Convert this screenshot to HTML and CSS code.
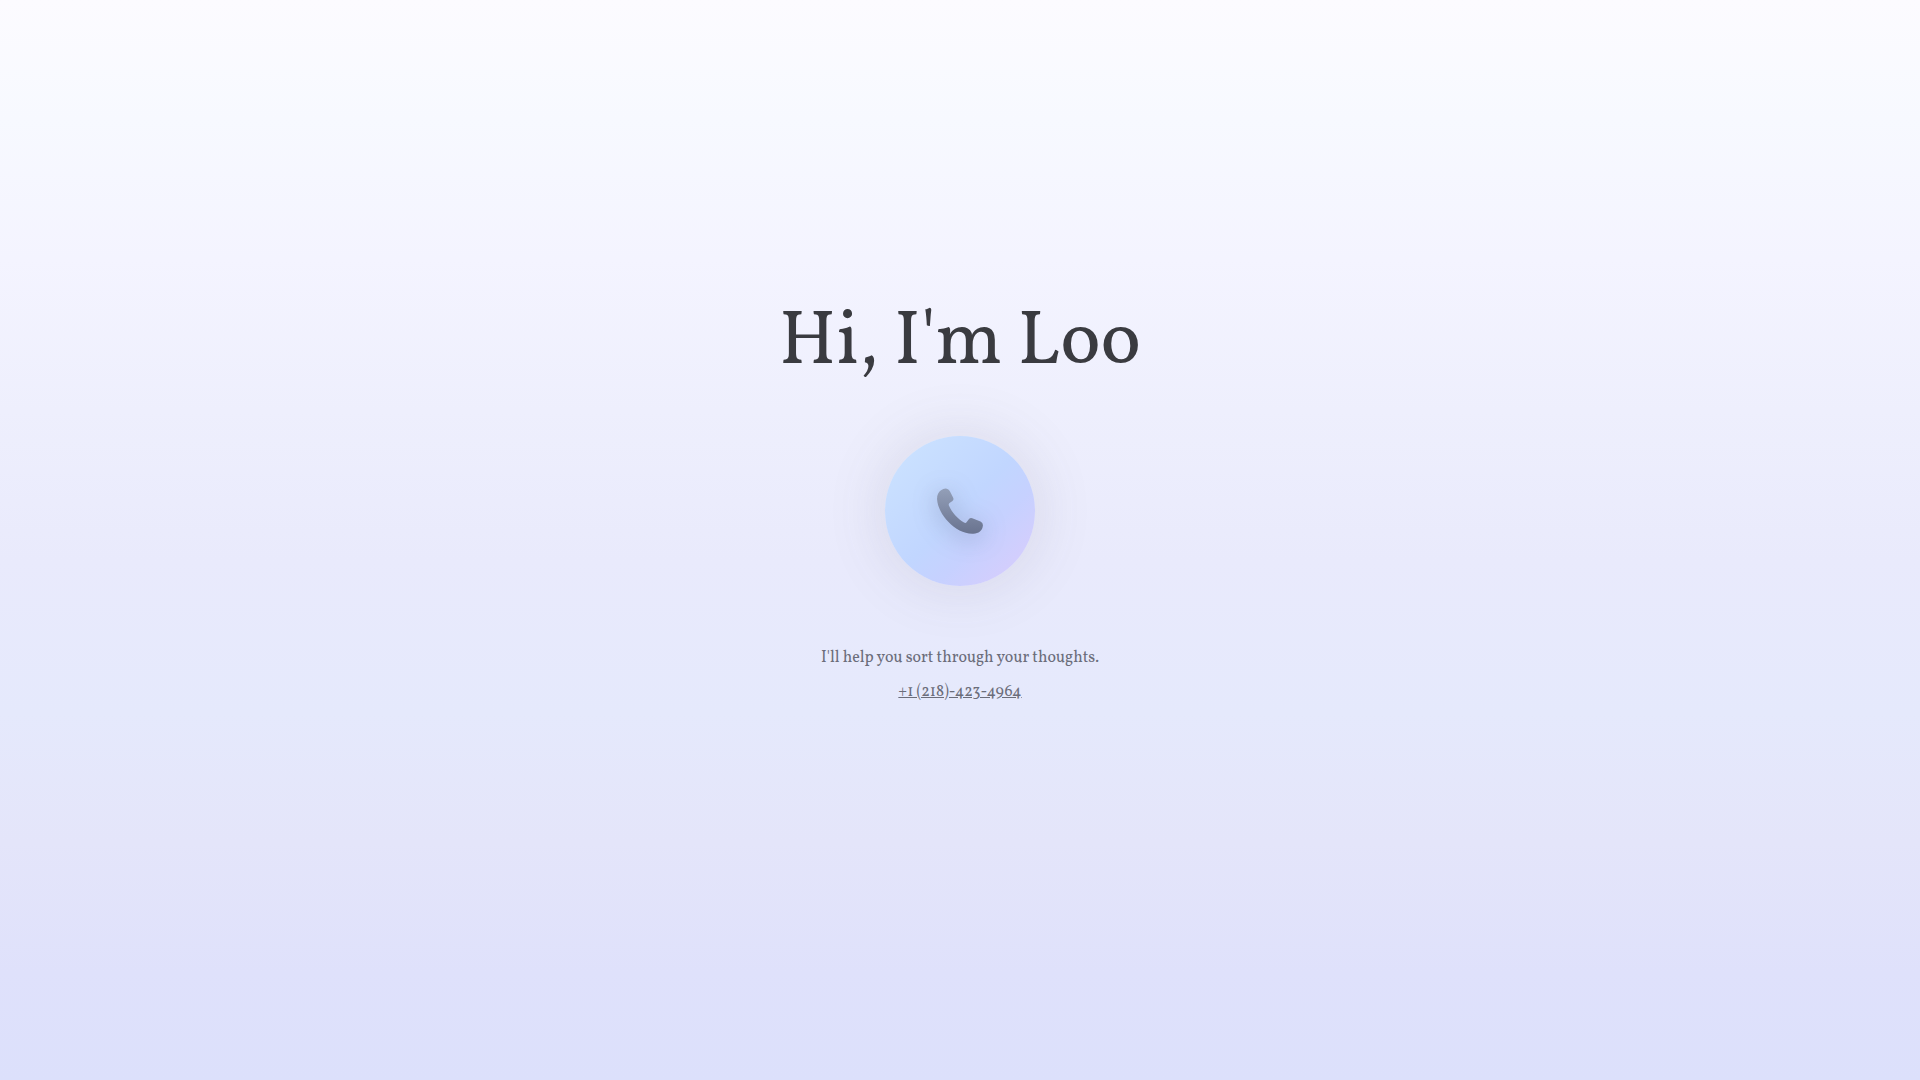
FILE: index.html
```
<!DOCTYPE html>
<html lang="en">
<head>
<meta charset="utf-8">
<meta name="viewport" content="width=device-width, initial-scale=1">
<title>Loo</title>
<link rel="stylesheet" href="styles.css">
</head>
<body>
<main class="hero">
  <h1 class="title">Hi, I'm Loo</h1>
  <button class="call" type="button" aria-label="Call Loo">
    <svg class="call-icon" viewBox="0 0 80 80" aria-hidden="true">
      <defs>
        <linearGradient id="handset" x1="0" y1="0" x2="0" y2="1">
          <stop offset="0" stop-color="#939fb8"/>
          <stop offset="1" stop-color="#69738f"/>
        </linearGradient>
      </defs>
      <path fill="url(#handset)" d="M21 19.300Q25 16.400 28 18.300Q29.200 19 30 20.500L33.200 26.800Q34 28.700 32.500 30L29.500 32Q28.200 33 29 34.800C32 41.500 37.500 47.500 44 51.600Q45.700 52.600 46.700 51L49 48Q50.400 46.300 52.300 47.200L60.500 50.600Q63.100 51.800 62.900 54.400C62.600 59.500 58.500 62.400 53.500 62.700C36 63.700 18 43.500 17.100 28.500Q16.700 22.500 21 19.300Z"/>
    </svg>
  </button>
  <p class="tagline">I'll help you sort through your thoughts.</p>
  <a class="phone" href="tel:+12184234964">+1 (218)-423-4964</a>
</main>
</body>
</html>
```
FILE: styles.css
```
* {
  box-sizing: border-box;
}

body {
  margin: 0;
  min-height: 100vh;
  font-family: Vollkorn, "Liberation Serif", serif;
  background: linear-gradient(
    #fcfbff 0%,
    #f7f9ff 11%,
    #f4f4ff 24%,
    #eeeffd 38%,
    #e9eafc 52%,
    #e5e9fc 66%,
    #e4e5fa 78%,
    #dfe1fb 90%,
    #dce0fb 100%
  );
}

.hero {
  min-height: 100vh;
  display: flex;
  flex-direction: column;
  align-items: center;
  justify-content: center;
  padding: 0 24px 78px;
  text-align: center;
}

.title {
  margin: 0 0 44px;
  font-size: 76px;
  line-height: 96px;
  font-weight: 400;
  color: #3a3b40;
}

.call {
  width: 150px;
  height: 150px;
  margin: 0 0 58px;
  padding: 0;
  display: flex;
  align-items: center;
  justify-content: center;
  border: 0;
  border-radius: 50%;
  background: linear-gradient(135deg, #cbe2ff 8%, #c1d6ff 50%, #c6d1ff 66%, #d2cefd 84%);
  box-shadow: 0 0 60px rgba(90, 90, 100, 0.15);
  cursor: pointer;
}

.call-icon {
  width: 80px;
  height: 80px;
  overflow: visible;
  filter: drop-shadow(0 4px 12px rgba(80, 90, 120, 0.35));
}

.tagline,
.phone {
  font-size: 16px;
  line-height: 28px;
  color: #6b6d7a;
}

.tagline {
  margin: 0 0 6px;
}

.phone {
  text-decoration: underline;
}
```
